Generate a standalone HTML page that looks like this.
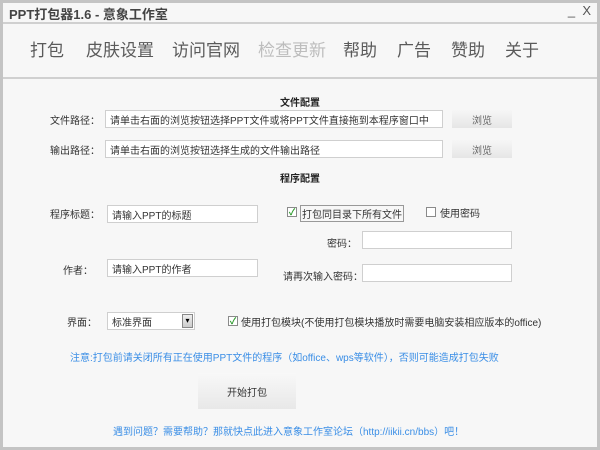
<!DOCTYPE html>
<html><head><meta charset="utf-8"><style>
*{margin:0;padding:0;box-sizing:border-box}
body{width:600px;height:450px;background:#c4c4c4;font-family:"Liberation Sans","Noto Sans CJK SC",sans-serif;position:relative;overflow:hidden}
.win{position:absolute;left:3px;top:3px;width:594px;height:444px;background:#f7f7f7}
.a{position:absolute;white-space:nowrap}
.title{left:6px;top:1px;font-size:13px;color:#444;font-weight:bold}
.nav{top:33px;font-size:17px;color:#5a5a5a}
.s{font-size:10px;color:#333}
.b{font-weight:bold;font-size:10px;color:#222}
.in{position:absolute;background:#fff;border:1px solid #cfcfcf;font-size:10px;color:#333;padding-left:4px;display:flex;align-items:center}
.btn{position:absolute;background:linear-gradient(#f6f6f6,#e6e6e6);font-size:10px;color:#666;display:flex;align-items:center;justify-content:center}
.cb{position:absolute;width:10px;height:10px;border:1px solid #8a8a8a;background:#fff;font-size:9px;color:#2a9a2a;line-height:8px;text-align:center;font-weight:bold}
.blue{color:#3a8ee6;font-size:10px}
</style></head><body>
<div class="win">
<div class="a title">PPT打包器1.6 - 意象工作室</div>
<div class="a" style="right:6px;top:0px;font-size:13px;color:#555">_&nbsp;&nbsp;X</div>
<div class="a" style="left:0;top:19px;width:594px;height:2px;background:#d0d0d0"></div>
<div class="a" style="left:0;top:74px;width:594px;height:2px;background:#d0d0d0"></div>
<div class="a nav" style="left:27px">打包</div>
<div class="a nav" style="left:83px">皮肤设置</div>
<div class="a nav" style="left:169px">访问官网</div>
<div class="a nav" style="left:255px;color:#bdbdbd">检查更新</div>
<div class="a nav" style="left:340px">帮助</div>
<div class="a nav" style="left:394px">广告</div>
<div class="a nav" style="left:448px">赞助</div>
<div class="a nav" style="left:502px">关于</div>

<div class="a b" style="left:277px;top:91px">文件配置</div>
<div class="a s" style="left:47px;top:109px">文件路径：</div>
<div class="in" style="left:102px;top:107px;width:338px;height:18px">请单击右面的浏览按钮选择PPT文件或将PPT文件直接拖到本程序窗口中</div>
<div class="btn" style="left:449px;top:107px;width:60px;height:18px">浏览</div>
<div class="a s" style="left:47px;top:139px">输出路径：</div>
<div class="in" style="left:102px;top:137px;width:338px;height:18px">请单击右面的浏览按钮选择生成的文件输出路径</div>
<div class="btn" style="left:449px;top:137px;width:60px;height:18px">浏览</div>
<div class="a b" style="left:277px;top:167px">程序配置</div>

<div class="a s" style="left:47px;top:203px">程序标题：</div>
<div class="in" style="left:104px;top:202px;width:151px;height:18px">请输入PPT的标题</div>
<div class="cb" style="left:284px;top:204px">✓</div>
<div class="a s" style="left:297px;top:202px;border:1px solid #999;padding:0 1px">打包同目录下所有文件</div>
<div class="cb" style="left:423px;top:204px"></div>
<div class="a s" style="left:437px;top:202px">使用密码</div>
<div class="a s" style="left:324px;top:232px">密码：</div>
<div class="in" style="left:359px;top:228px;width:150px;height:18px"></div>
<div class="a s" style="left:60px;top:259px">作者：</div>
<div class="in" style="left:104px;top:256px;width:151px;height:18px">请输入PPT的作者</div>
<div class="a s" style="left:280px;top:265px">请再次输入密码：</div>
<div class="in" style="left:359px;top:261px;width:150px;height:18px"></div>

<div class="a s" style="left:64px;top:311px">界面：</div>
<div class="in" style="left:104px;top:309px;width:88px;height:18px">标准界面</div>
<div class="a" style="left:179px;top:311px;width:11px;height:14px;background:linear-gradient(#eee,#ccc);border:1px solid #888;font-size:8px;text-align:center;line-height:12px">▾</div>
<div class="cb" style="left:225px;top:313px">✓</div>
<div class="a s" style="left:238px;top:311px">使用打包模块(不使用打包模块播放时需要电脑安装相应版本的office)</div>

<div class="a blue" style="left:67px;top:346px">注意:打包前请关闭所有正在使用PPT文件的程序（如office、wps等软件），否则可能造成打包失败</div>
<div class="btn" style="left:195px;top:370px;width:98px;height:36px;color:#333;background:linear-gradient(#f8f8f8,#e8e8e8)">开始打包</div>
<div class="a blue" style="left:110px;top:420px">遇到问题？需要帮助？那就快点此进入意象工作室论坛（http://iikii.cn/bbs）吧！</div>
</div>
</body></html>
